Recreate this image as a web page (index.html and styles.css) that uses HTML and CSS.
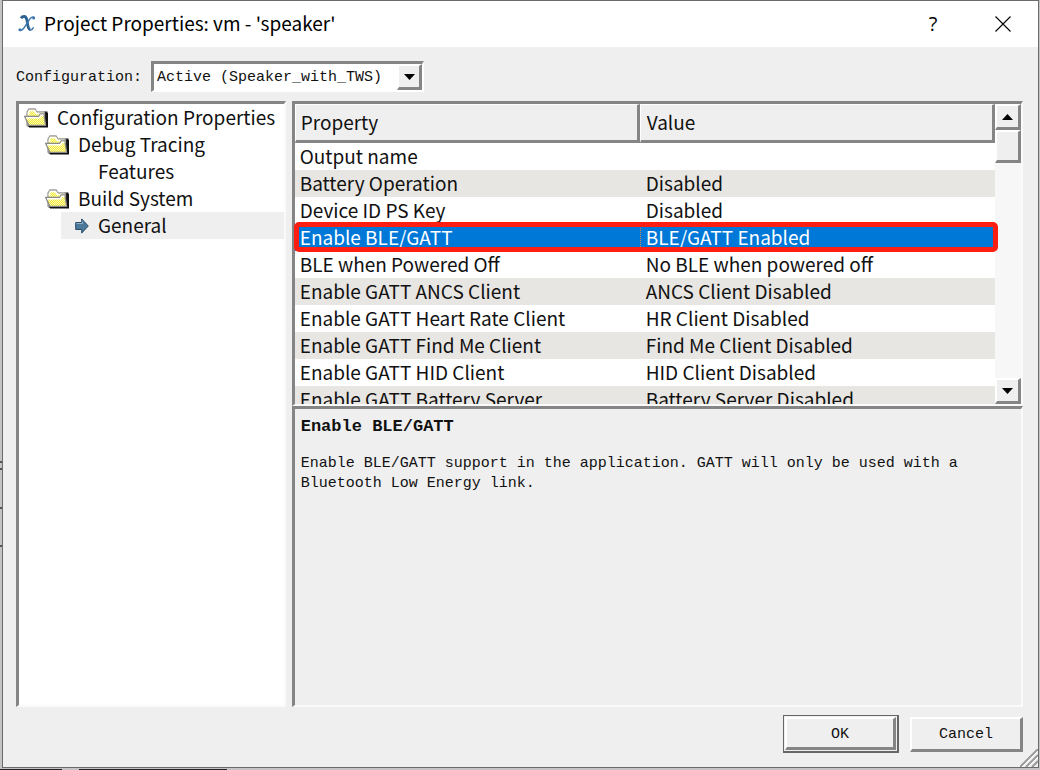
FILE: index.html
```html
<!DOCTYPE html>
<html lang="en">
<head>
<meta charset="utf-8">
<title>Project Properties</title>
<link rel="stylesheet" href="styles.css">
</head>
<body>
<div class="dialog">
  <header class="titlebar">
    <svg class="logo" viewBox="0 0 18 18" aria-hidden="true">
      <path d="M3 3.2Q4 1.5 6.2 1.5C8.500 1.5 8.800 4 9.200 6.500C9.800 10.500 10.200 14.500 12.400 14.500" fill="none" stroke="#2e6293" stroke-width="2.8"/>
      <path d="M1.300 14.800Q3.200 16.400 5.500 13.600L11.600 4.400Q13.600 1.200 16.200 2.400M12.400 15Q14.200 15.200 15.200 12.800" fill="none" stroke="#3d77ad" stroke-width="1.500" stroke-linecap="round"/>
      <circle cx="2" cy="14.800" r="1.500" fill="#3d77ad"/><circle cx="15.700" cy="2.900" r="1.500" fill="#3d77ad"/>
    </svg>
    <h1 class="title">Project Properties: vm - 'speaker'</h1>
    <button class="caption" type="button">?</button>
    <button class="caption" type="button" aria-label="Close">
      <svg width="16" height="16" viewBox="0 0 16 16"><path d="M.5.5l15 15M15.5.5l-15 15" stroke="#000" stroke-width="1.1"/></svg>
    </button>
  </header>
  <main class="content">
    <div class="config">
      <label for="configuration">Configuration:</label>
      <div class="combo">
        <select id="configuration"><option>Active (Speaker_with_TWS)</option></select>
        <span class="drop"><svg width="11" height="6" viewBox="0 0 11 6"><path d="M0 0h11L5.500 6z"/></svg></span>
      </div>
    </div>
    <div class="panes">
      <nav class="tree sunken">
        <svg class="defs" aria-hidden="true">
          <defs>
            <pattern id="dither" width="2" height="2" patternUnits="userSpaceOnUse"><path fill="#f0e83c" d="M0 0h2v2H0z"/><path fill="#fffbb0" d="M0 0h1v1H0zM1 1h1v1H1z"/></pattern>
            <symbol id="folder" viewBox="0 0 24 20">
              <path d="M20 3.500h3.500V19H5l-2-1" fill="#111"/>
              <path d="M3 17V4l2-3h6l2 3h7.500v13z" fill="url(#dither)" stroke="#999" stroke-width="1.300"/>
              <path d="M4.500 7V4.500l1-2h5l2 3h7" fill="none" stroke="#fff" stroke-width="1.600"/>
              <path d="M.7 8.500h14l1.500-2.500h3.500l2 11.500H5z" fill="url(#dither)" stroke="#8b8b8b" stroke-width="1.300"/>
              <path d="M2 9.700h13.500l1.500-2.500h2.500" fill="none" stroke="#fff" stroke-width="1.600"/>
              <path d="M5 18.700h18.300V5" fill="none" stroke="#111" stroke-width="1.400"/>
            </symbol>
          </defs>
        </svg>
        <ul>
          <li><a class="node" href="#"><svg class="folder"><use href="#folder"/></svg><span>Configuration Properties</span></a>
            <ul>
              <li><a class="node" href="#"><svg class="folder"><use href="#folder"/></svg><span>Debug Tracing</span></a>
                <ul><li><a class="node leaf" href="#"><span class="arrow"></span><span>Features</span></a></li></ul>
              </li>
              <li><a class="node" href="#"><svg class="folder"><use href="#folder"/></svg><span>Build System</span></a>
                <ul><li><a class="node leaf current" href="#"><svg class="arrow" viewBox="0 0 14 16"><path d="M.7 4.500h6V.9L13.300 8l-6.600 7.100v-3.600h-6z" fill="#4c7899" stroke="#294d69"/><path d="M1.500 5.500h6V3.500" fill="none" stroke="#8fb3cc"/></svg><span>General</span></a></li></ul>
              </li>
            </ul>
          </li>
        </ul>
      </nav>
      <section class="right">
        <div class="list sunken">
          <div class="view">
            <table>
              <thead><tr><th scope="col">Property</th><th scope="col">Value</th></tr></thead>
              <tbody>
                <tr><td>Output name</td><td></td></tr>
                <tr><td>Battery Operation</td><td>Disabled</td></tr>
                <tr><td>Device ID PS Key</td><td>Disabled</td></tr>
                <tr class="selected"><td>Enable BLE/GATT</td><td>BLE/GATT Enabled</td></tr>
                <tr><td>BLE when Powered Off</td><td>No BLE when powered off</td></tr>
                <tr><td>Enable GATT ANCS Client</td><td>ANCS Client Disabled</td></tr>
                <tr><td>Enable GATT Heart Rate Client</td><td>HR Client Disabled</td></tr>
                <tr><td>Enable GATT Find Me Client</td><td>Find Me Client Disabled</td></tr>
                <tr><td>Enable GATT HID Client</td><td>HID Client Disabled</td></tr>
                <tr><td>Enable GATT Battery Server</td><td>Battery Server Disabled</td></tr>
              </tbody>
            </table>
          </div>
          <div class="scrollbar">
            <button class="step" type="button" aria-label="Scroll up"><svg width="11" height="6" viewBox="0 0 11 6"><path d="M0 6h11L5.500 0z"/></svg></button>
            <div class="thumb"></div>
            <button class="step last" type="button" aria-label="Scroll down"><svg width="11" height="6" viewBox="0 0 11 6"><path d="M0 0h11L5.500 6z"/></svg></button>
          </div>
        </div>
        <div class="details sunken">
          <h2>Enable BLE/GATT</h2>
          <p>Enable BLE/GATT support in the application. GATT will only be used with a Bluetooth Low Energy link.</p>
        </div>
      </section>
    </div>
    <footer class="actions">
      <div class="default"><button class="push" type="button">OK</button></div>
      <button class="push" type="button">Cancel</button>
    </footer>
  </main>
  <svg class="grip" viewBox="0 0 18 18" aria-hidden="true"><path d="M0 18L18 0M6 18L18 6M12 18l6-6" stroke="#9a9a9a" stroke-width="2"/><path d="M2 18L18 2M8 18L18 8" stroke="#fff"/></svg>
</div>
</body>
</html>
```
FILE: styles.css
```css
* { box-sizing: border-box; }

/* Edges of the window that lies behind the dialog */
body {
  margin: 0;
  height: 100vh;
  padding: 0 1px 2px 2px;
  background:
    linear-gradient(#222, #222) 0 100% / 62px 1px no-repeat,
    linear-gradient(#222, #222) 79px 100% / 148px 1px no-repeat,
    linear-gradient(#555, #555) 0 60% / 2px 2px no-repeat,
    linear-gradient(#555, #555) 0 61% / 2px 2px no-repeat,
    linear-gradient(#555, #555) 0 66% / 2px 2px no-repeat,
    linear-gradient(#555, #555) 0 71% / 2px 2px no-repeat,
    #c4c4c4;
  color: #111;
  font: 19px/27px "Noto Sans CJK SC", "Noto Sans", sans-serif;
}

button, select { font: inherit; color: inherit; }

.dialog {
  position: relative;
  display: flex;
  flex-direction: column;
  height: 100%;
  min-height: 480px;
  border: 1px solid #6b6b6b;
  background: #efefef;
}

.titlebar {
  display: flex;
  align-items: center;
  height: 46px;
  padding-left: 15px;
  background: #fff;
  color: #000;
}

.logo { width: 18px; height: 18px; margin-right: 8px; }

.title {
  flex: 1;
  margin: 0;
  padding-bottom: 2px;
  font: 19px/26px "Noto Sans CJK SC", sans-serif;
}

.caption {
  display: flex;
  align-items: center;
  justify-content: center;
  width: 70px;
  height: 46px;
  padding: 0;
  border: 0;
  background: none;
  font: 20px/26px "Open Sans", sans-serif;
}

.content {
  flex: 1;
  display: flex;
  flex-direction: column;
  min-height: 0;
  padding: 14px 15px 14px 13px;
}

.config {
  display: flex;
  align-items: center;
  gap: 9px;
  font: 15px/20px "Liberation Mono", monospace;
}

.config label { padding-top: 2px; }

.combo {
  display: flex;
  position: relative;
  width: 273px;
  height: 31px;
  border: 2px solid;
  border-width: 3px 2px 2px 3px;
  border-color: #858585 #fff #fff #858585;
}

.combo select {
  flex: 1;
  padding: 2px 26px 0 3px;
  border: 0;
  border-radius: 0;
  appearance: none;
  background: #fff;
}

.drop {
  position: absolute;
  top: 0;
  right: 0;
  bottom: 0;
  width: 25px;
  pointer-events: none;
}

.drop, .step, .thumb, .push {
  display: flex;
  align-items: center;
  justify-content: center;
  padding: 0;
  border: 2px solid;
  border-width: 2px 3px 3px 2px;
  border-color: #fff #858585 #858585 #fff;
  background: #efefef;
}

.panes {
  flex: 1;
  display: grid;
  grid-template-columns: 270fr 732fr;
  gap: 6px;
  min-height: 0;
  margin-top: 9px;
}

.sunken {
  border: 2px solid;
  border-width: 3px 2px 2px 3px;
  border-color: #858585 #fafafa #fafafa #858585;
}

.tree { background: #fff; overflow: hidden; }
.defs { position: absolute; width: 0; height: 0; }
.tree ul { margin: 0; padding: 0; list-style: none; }
.tree > ul { padding-left: 5px; }
.tree ul ul { padding-left: 21px; }

.node {
  display: flex;
  align-items: center;
  gap: 9px;
  height: 27px;
  color: inherit;
  text-decoration: none;
  white-space: nowrap;
}

.node span { padding-bottom: 3px; }
.folder { flex: none; width: 24px; height: 20px; }
.arrow { flex: none; width: 14px; height: 16px; }
.leaf { padding-left: 14px; margin-left: -5px; }
.current { background: #efefef; }

.right {
  display: grid;
  grid-template-rows: 305fr 301fr;
  min-width: 0;
  min-height: 0;
}

.list { display: flex; min-height: 0; background: #efefef; }

.view {
  flex: 1;
  min-width: 0;
  position: relative;
  z-index: 1;
  overflow-x: visible;
  overflow-y: clip;
  background: #fff;
}

table {
  width: 100%;
  border-collapse: separate;
  border-spacing: 0;
  table-layout: fixed;
}

th {
  height: 39px;
  padding: 0 6px 2px;
  border: 2px solid;
  border-width: 1px 3px 3px 1px;
  border-color: #fff #858585 #858585 #fff;
  background: #efefef;
  font-weight: 400;
  text-align: left;
}

th:first-child { width: 345px; }

td {
  height: 27px;
  padding: 0 6px 2px;
  line-height: 25px;
  white-space: nowrap;
}

td:first-child, th:first-child { padding-left: 5px; }

tbody tr:nth-child(even) { background: #e8e6e2; }

tbody tr.selected {
  position: relative;
  background: #0078d7;
  color: #fff;
}

.selected td + td { padding-left: 5px; border-left: 1px dotted #d08850; }

.selected td:first-child::after {
  content: "";
  position: absolute;
  inset: -2px -3px -1px -1px;
  border: 5px solid #ff1e12;
  border-radius: 5px;
}

.scrollbar {
  display: flex;
  flex-direction: column;
  width: 26px;
  background: #f7f7f7;
}

.step { height: 26px; }
.last { margin-top: auto; }
.thumb { height: 33px; }

.details {
  padding: 8px 60px 7px 6px;
  font: 15px/20px "Liberation Mono", monospace;
}

.details h2 { margin: 0 0 17px; font-size: 17px; line-height: 20px; }
.details p { margin: 0; }

.actions {
  display: flex;
  align-items: center;
  justify-content: flex-end;
  gap: 11px;
  margin-top: 8px;
  font: 15px/20px "Liberation Mono", monospace;
}

.push { width: 113px; height: 35px; padding-top: 3px; }
.default { padding: 1px; border: 1px solid #666; border-width: 1px 2px 2px 1px; }
.default .push { width: 111px; height: 33px; }

.grip { position: absolute; right: 0; bottom: 0; width: 18px; height: 18px; }
```
